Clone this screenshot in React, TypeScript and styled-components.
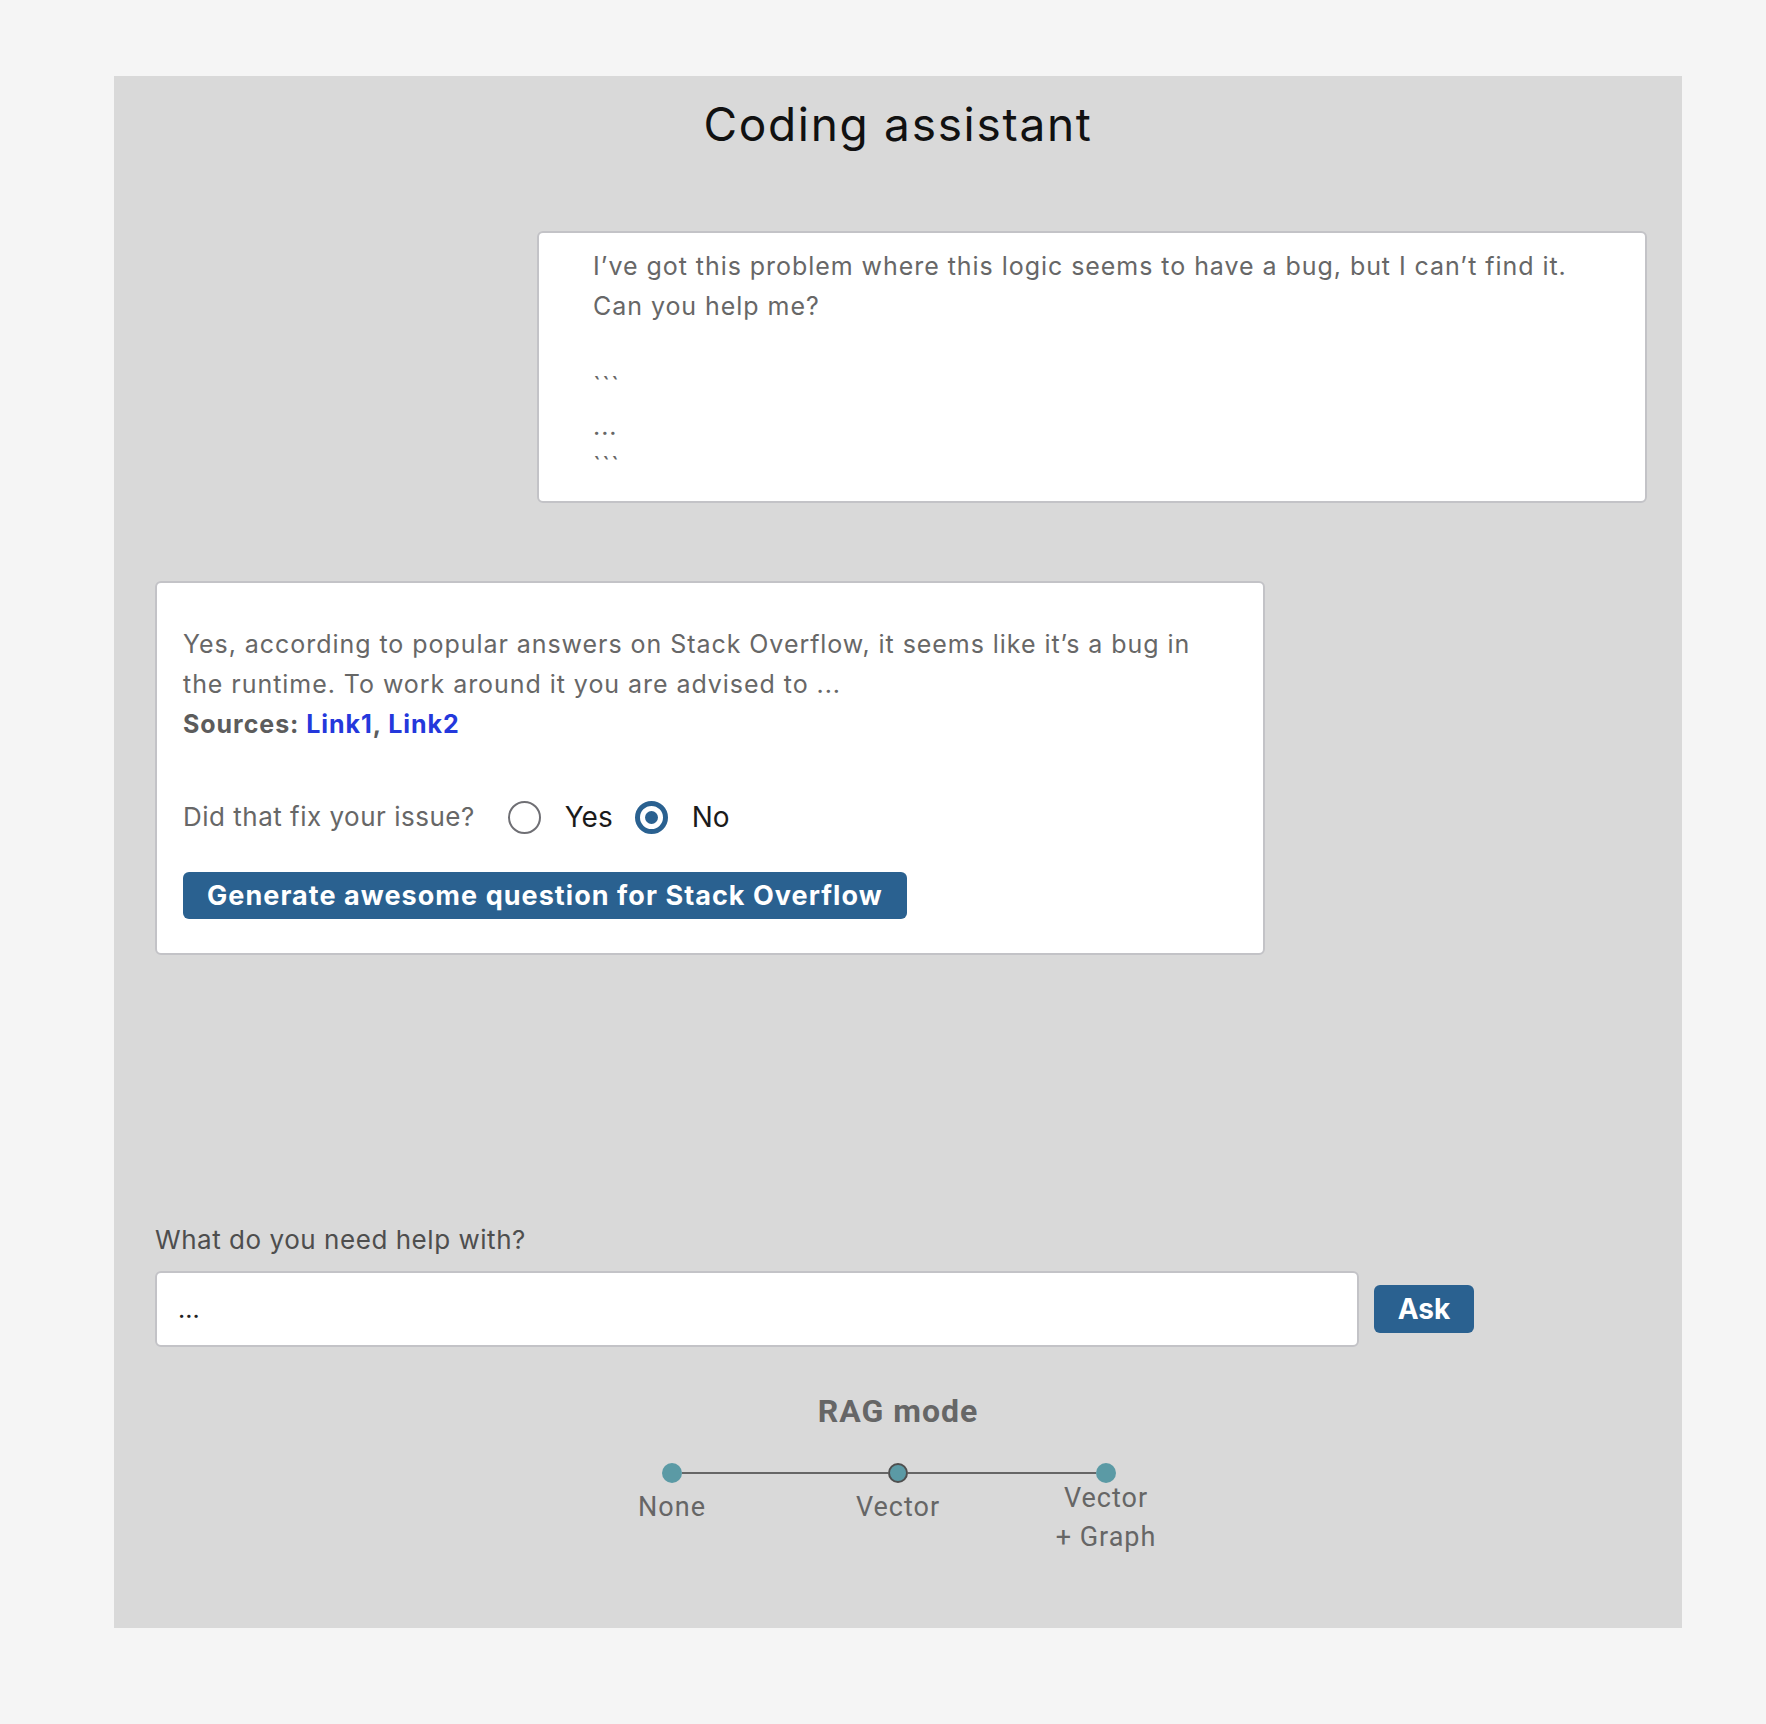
import React from "react";
import styled, { createGlobalStyle } from "styled-components";

const Global = createGlobalStyle`
  html, body { margin: 0; padding: 0; background: #f5f5f5; }
  body { font-family: "Inter", "Noto Sans", sans-serif; -webkit-font-smoothing: antialiased; }
  * { box-sizing: border-box; }
`;

const Page = styled.div`
  padding: 76px 0 96px 114px;
`;

const Panel = styled.main`
  width: 1568px;
  background: #d9d9d9;
  height: 1552px;
  padding: 0 35px 0 41px;
  display: flex;
  flex-direction: column;
`;

const Title = styled.h1`
  margin: 0;
  padding: 20px 6px 0 0;
  font-family: "Inter", sans-serif;
  font-weight: 400;
  font-size: 46px;
  line-height: 56px;
  letter-spacing: 1.7px;
  color: #111;
  text-align: center;
`;

const ChatArea = styled.section`
  height: 1070px;
  padding-top: 79px;
  display: flex;
  flex-direction: column;
  gap: 78px;
`;

const Bubble = styled.div`
  width: 1110px;
  background: #fff;
  border: 2px solid #c3c3c7;
  border-radius: 6px;
  font-size: 25px;
  line-height: 40px;
  letter-spacing: 0.95px;
  color: #676767;
`;

const UserBubble = styled(Bubble)`
  align-self: flex-end;
  padding: 13px 40px 15px 54px;
`;

const AnswerBubble = styled(Bubble)`
  align-self: flex-start;
  padding: 41px 26px 34px 26px;
`;

const Line = styled.div`
  white-space: nowrap;
  min-height: 40px;
`;

const Sources = styled.div`
  font-weight: 700;
  color: #5c5c5c;
  white-space: nowrap;
`;

const SourceLink = styled.a`
  color: #2438dc;
  text-decoration: none;
`;

const Feedback = styled.div`
  margin-top: 53px;
  height: 40px;
  display: flex;
  align-items: center;
  letter-spacing: normal;
`;

const FeedbackQuestion = styled.span`
  font-size: 26px;
  letter-spacing: 0.5px;
  color: #676767;
  margin-right: 33px;
`;

const RadioOption = styled.label`
  display: flex;
  align-items: center;
  gap: 24px;
  margin-right: 22px;
  font-size: 28px;
  color: #1b1b1b;
  cursor: pointer;
`;

const RadioMark = styled.span<{ $checked?: boolean }>`
  width: 33px;
  height: 33px;
  border-radius: 50%;
  flex-shrink: 0;
  background: #fff;
  border: ${(p) => (p.$checked ? "5px solid #2a6190" : "2px solid #6f6f74")};
  display: flex;
  align-items: center;
  justify-content: center;
  &::after {
    content: "";
    display: ${(p) => (p.$checked ? "block" : "none")};
    width: 13px;
    height: 13px;
    border-radius: 50%;
    background: #2a6190;
  }
`;

const PrimaryButton = styled.button<{ $size?: "lg" | "sm" }>`
  border: none;
  border-radius: 6px;
  background: #2a6190;
  color: #fff;
  font-family: "Inter", sans-serif;
  font-weight: 700;
  font-size: 27px;
  letter-spacing: 1.05px;
  cursor: pointer;
  height: ${(p) => (p.$size === "sm" ? "48px" : "47px")};
  padding: 0 24px;
  display: inline-flex;
  align-items: center;
  white-space: nowrap;
`;

const GenerateButton = styled(PrimaryButton)`
  margin-top: 35px;
  align-self: flex-start;
`;

const AnswerBody = styled.div`
  display: flex;
  flex-direction: column;
`;

const Composer = styled.section`
  display: flex;
  flex-direction: column;
`;

const ComposerLabel = styled.label`
  font-size: 26px;
  line-height: 36px;
  letter-spacing: 0.54px;
  color: #4e4e4e;
  margin-bottom: 13px;
`;

const InputRow = styled.div`
  display: flex;
  align-items: center;
  gap: 15px;
`;

const TextInput = styled.div`
  width: 1204px;
  height: 76px;
  background: #fff;
  border: 2px solid #c3c3c7;
  border-radius: 6px;
  padding: 0 21px;
  display: flex;
  align-items: center;
  font-size: 25px;
  color: #222;
`;

const AskButton = styled(PrimaryButton)`
  width: 100px;
  justify-content: center;
  padding: 0;
  font-size: 28px;
  letter-spacing: 0;
`;

const RagSection = styled.section`
  padding-right: 6px;
  margin-top: 45px;
  font-family: "Roboto", sans-serif;
`;

const RagTitle = styled.h2`
  margin: 0;
  font-family: "Roboto", sans-serif;
  font-weight: 700;
  font-size: 32px;
  line-height: 38px;
  letter-spacing: 1px;
  color: #666;
  text-align: center;
`;

const SliderTrack = styled.div`
  display: grid;
  grid-template-columns: 1fr auto 1fr;
  margin-top: 33px;
`;

const Side = styled.div<{ $end?: boolean }>`
  display: flex;
  align-items: flex-start;
  justify-content: ${(p) => (p.$end ? "flex-end" : "flex-start")};
`;

const Stop = styled.div`
  width: 20px;
  display: flex;
  flex-direction: column;
  align-items: center;
`;

const Knob = styled.span<{ $active?: boolean }>`
  width: 20px;
  height: 20px;
  border-radius: 50%;
  flex-shrink: 0;
  background: #5b9aa5;
  border: ${(p) => (p.$active ? "2px solid #4f4f4f" : "none")};
`;

const StopLabel = styled.span<{ $lift?: number }>`
  margin-top: ${(p) => 5 - (p.$lift || 0)}px;
  font-family: "Roboto", sans-serif;
  font-size: 27px;
  line-height: 39px;
  letter-spacing: 1px;
  color: #666;
  text-align: center;
  white-space: nowrap;
`;

const Rail = styled.span<{ $w: number }>`
  width: ${(p) => p.$w}px;
  height: 2px;
  margin-top: 9px;
  background: #666;
  flex-shrink: 0;
`;

export default function App() {
  return (
    <>
      <Global />
      <Page>
        <Panel>
          <Title>Coding assistant</Title>
          <ChatArea>
            <UserBubble>
              <Line>I’ve got this problem where this logic seems to have a bug, but I can’t find it.</Line>
              <Line>Can you help me?</Line>
              <Line />
              <Line>```</Line>
              <Line>...</Line>
              <Line>```</Line>
            </UserBubble>
            <AnswerBubble>
              <AnswerBody>
                <Line>Yes, according to popular answers on Stack Overflow, it seems like it’s a bug in</Line>
                <Line>the runtime. To work around it you are advised to ...</Line>
                <Sources>
                  Sources: <SourceLink href="#">Link1</SourceLink>, <SourceLink href="#">Link2</SourceLink>
                </Sources>
                <Feedback>
                  <FeedbackQuestion>Did that fix your issue?</FeedbackQuestion>
                  <RadioOption>
                    <RadioMark />
                    Yes
                  </RadioOption>
                  <RadioOption>
                    <RadioMark $checked />
                    No
                  </RadioOption>
                </Feedback>
                <GenerateButton>Generate awesome question for Stack Overflow</GenerateButton>
              </AnswerBody>
            </AnswerBubble>
          </ChatArea>
          <Composer>
            <ComposerLabel>What do you need help with?</ComposerLabel>
            <InputRow>
              <TextInput>...</TextInput>
              <AskButton $size="sm">Ask</AskButton>
            </InputRow>
          </Composer>
          <RagSection>
            <RagTitle>RAG mode</RagTitle>
            <SliderTrack>
              <Side $end>
                <Stop>
                  <Knob />
                  <StopLabel>None</StopLabel>
                </Stop>
                <Rail $w={206} />
              </Side>
              <Stop>
                <Knob $active />
                <StopLabel>Vector</StopLabel>
              </Stop>
              <Side>
                <Rail $w={188} />
                <Stop>
                  <Knob />
                  <StopLabel $lift={9}>
                    Vector
                    <br />+ Graph
                  </StopLabel>
                </Stop>
              </Side>
            </SliderTrack>
          </RagSection>
        </Panel>
      </Page>
    </>
  );
}
